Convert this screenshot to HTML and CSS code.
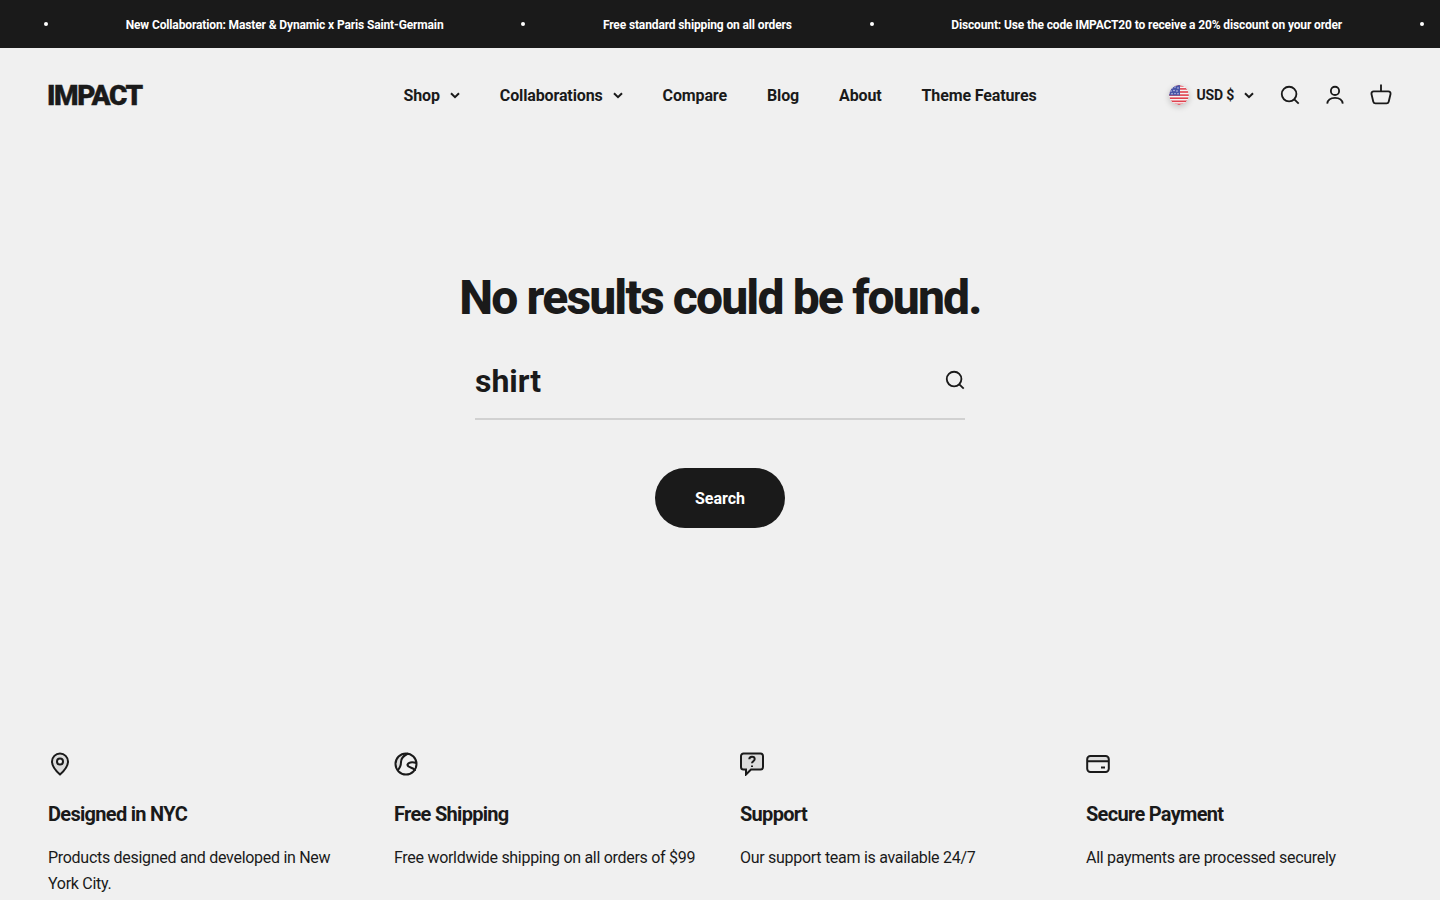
FILE: index.html
```html
<!DOCTYPE html>
<html lang="en">
<head>
    <meta charset="utf-8">
    <title>Search - Impact</title>
    <link rel="stylesheet" href="styles.css">
</head>
<body>
    <div class="announcement">
        <span class="dot"></span>
        <span class="announcement-text">New Collaboration: Master &amp; Dynamic x Paris Saint-Germain</span>
        <span class="dot"></span>
        <span class="announcement-text">Free standard shipping on all orders</span>
        <span class="dot"></span>
        <span class="announcement-text">Discount: Use the code IMPACT20 to receive a 20% discount on your order</span>
        <span class="dot"></span>
    </div>

    <header class="header">
        <a class="logo" href="#">IMPACT</a>
        <nav class="nav">
            <a href="#">Shop <svg class="chevron" viewBox="0 0 10 7"><path d="M1 1.2l4 4 4-4" /></svg></a>
            <a href="#">Collaborations <svg class="chevron" viewBox="0 0 10 7"><path d="M1 1.2l4 4 4-4" /></svg></a>
            <a href="#">Compare</a>
            <a href="#">Blog</a>
            <a href="#">About</a>
            <a href="#">Theme Features</a>
        </nav>
        <div class="tools">
            <div class="currency">
                <svg class="flag" viewBox="0 0 20 20">
                    <defs><clipPath id="flagClip"><circle cx="10" cy="10" r="10" /></clipPath></defs>
                    <g clip-path="url(#flagClip)">
                        <rect width="20" height="20" fill="#f4f4f4" />
                        <rect y="0" width="20" height="1.6" fill="#e0424f" />
                        <rect y="3.1" width="20" height="1.6" fill="#e0424f" />
                        <rect y="6.2" width="20" height="1.6" fill="#e0424f" />
                        <rect y="9.3" width="20" height="1.6" fill="#e0424f" />
                        <rect y="12.4" width="20" height="1.6" fill="#e0424f" />
                        <rect y="15.5" width="20" height="1.6" fill="#e0424f" />
                        <rect y="18.6" width="20" height="1.4" fill="#e0424f" />
                        <rect width="11" height="10.5" fill="#4a55a8" />
                        <g fill="#dfe3f5">
                            <circle cx="3" cy="3" r=".7" /><circle cx="6" cy="2" r=".7" /><circle cx="9" cy="3" r=".7" />
                            <circle cx="2" cy="6" r=".7" /><circle cx="5" cy="5.5" r=".7" /><circle cx="8" cy="6" r=".7" />
                            <circle cx="3" cy="8.8" r=".7" /><circle cx="6" cy="8.6" r=".7" /><circle cx="9" cy="8.8" r=".7" />
                        </g>
                    </g>
                </svg>
                <span>USD $</span>
                <svg class="chevron" viewBox="0 0 10 7"><path d="M1 1.2l4 4 4-4" /></svg>
            </div>
            <svg class="tool-icon tool-search" viewBox="0 0 24 24"><circle cx="11" cy="11" r="8" /><path d="M16.700 16.700L21.500 21.500" /></svg>
            <svg class="tool-icon" viewBox="0 0 24 24"><circle cx="12" cy="7.500" r="4.500" /><path d="M3.500 21.500c.6-4.200 4-6.300 8.500-6.300s7.900 2.100 8.500 6.300" /></svg>
            <svg class="tool-icon" viewBox="0 0 24 24"><path d="M4 8h16a2.500 2.500 0 0 1 2.400 3l-2 8.300a2.500 2.500 0 0 1-2.400 1.900H6a2.500 2.500 0 0 1-2.400-1.900l-2-8.300A2.500 2.500 0 0 1 4 8z" /><path d="M12 8V.5" /></svg>
        </div>
    </header>

    <main class="search-section">
        <h1>No results could be found.</h1>
        <form class="search-form">
            <div class="search-field">
                <span class="search-value">shirt</span>
                <svg class="search-icon" viewBox="0 0 24 24"><circle cx="11" cy="11" r="8" /><path d="M16.700 16.700L21.500 21.500" /></svg>
            </div>
            <button type="button" class="search-button">Search</button>
        </form>
    </main>

    <section class="features">
        <div class="feature">
            <svg class="feature-icon" viewBox="0 0 24 24">
                <path class="fill" d="M12 22.500s-8-7-8-13a8 8 0 0 1 16 0c0 6-8 13-8 13z" />
                <path d="M12 22.500s-8-7-8-13a8 8 0 0 1 16 0c0 6-8 13-8 13z" />
                <circle class="ring" cx="12" cy="9.500" r="3" />
            </svg>
            <h3>Designed in NYC</h3>
            <p>Products designed and developed in New York City.</p>
        </div>
        <div class="feature">
            <svg class="feature-icon" viewBox="0 0 24 24">
                <path class="fill" d="M14 1.500C10 3.500 7 6 7 10c0 3 0 5-3.500 8.500A10.500 10.500 0 0 1 14 1.500z" />
                <circle cx="12" cy="12" r="10.500" />
                <path d="M14 1.500C10 3.500 7 6 7 10c0 3 0 5-3.500 8.500" />
                <path d="M22.500 11c-3.500-1-7.500-1-9 1.500-.5 2.500 3.500 3 5.500 4 1 .5 2 1.500 2 2.500" />
            </svg>
            <h3>Free Shipping</h3>
            <p>Free worldwide shipping on all orders of $99</p>
        </div>
        <div class="feature">
            <svg class="feature-icon" viewBox="0 0 24 24">
                <path class="fill" d="M3.500 1.500h17a2.500 2.500 0 0 1 2.500 2.500v11a2.500 2.500 0 0 1-2.500 2.500H11l-5 5v-5H3.500A2.500 2.500 0 0 1 1 15V4a2.500 2.500 0 0 1 2.500-2.500z" />
                <path d="M3.500 1.500h17a2.500 2.500 0 0 1 2.500 2.500v11a2.500 2.500 0 0 1-2.500 2.500H11l-5 5v-5H3.500A2.500 2.500 0 0 1 1 15V4a2.500 2.500 0 0 1 2.500-2.500z" />
                <path d="M9.300 7.300c0-1.600 1.200-2.600 2.700-2.600s2.700 1 2.700 2.400c0 2.200-2.700 2.200-2.700 4.200" />
                <path d="M12 13.500v1.500" />
            </svg>
            <h3>Support</h3>
            <p>Our support team is available 24/7</p>
        </div>
        <div class="feature">
            <svg class="feature-icon" viewBox="0 0 24 24">
                <path class="fill" d="M1.500 9V7a3 3 0 0 1 3-3h15a3 3 0 0 1 3 3v2z" />
                <rect x="1.200" y="4" width="21.600" height="16" rx="3.200" />
                <path d="M1.200 9.200h21.600M15 15.500h4" />
            </svg>
            <h3>Secure Payment</h3>
            <p>All payments are processed securely</p>
        </div>
    </section>
</body>
</html>
```

FILE: styles.css
```css
* {
    box-sizing: border-box;
}

body {
    margin: 0;
    font-family: Roboto, "Liberation Sans", sans-serif;
    background-color: #f0f0f0;
    color: #1a1a1a;
}

a {
    color: inherit;
    text-decoration: none;
}

.announcement {
    display: flex;
    align-items: center;
    gap: 77.7px;
    height: 48px;
    padding-left: 44px;
    overflow: hidden;
    background-color: #1a1a1a;
    color: #fff;
    font-size: 12px;
    font-weight: 700;
    letter-spacing: -0.13px;
    white-space: nowrap;
}

.dot {
    flex: none;
    width: 4px;
    height: 4px;
    border-radius: 50%;
    background-color: #fff;
}

.announcement-text {
    flex: none;
    padding-top: 2px;
}

.header {
    display: grid;
    grid-template-columns: 1fr auto 1fr;
    align-items: center;
    height: 94px;
    padding: 0 48px;
}

.logo {
    margin-left: -1px;
    padding-top: 2px;
    font-size: 28px;
    font-weight: 900;
    letter-spacing: -1.4px;
    line-height: 1;
    -webkit-text-stroke: 0.4px #1a1a1a;
}

.nav {
    display: flex;
    align-items: center;
    gap: 40px;
    font-size: 16px;
    font-weight: 700;
    letter-spacing: -0.13px;
}

.nav a {
    display: flex;
    align-items: center;
    gap: 10px;
}

.chevron {
    width: 10px;
    height: 7px;
    fill: none;
    stroke: #1a1a1a;
    stroke-width: 2;
}

.tools {
    display: flex;
    align-items: center;
    justify-content: flex-end;
    gap: 24px;
}

.currency {
    display: flex;
    align-items: center;
    gap: 8px;
    font-size: 14px;
    font-weight: 700;
    letter-spacing: -0.2px;
}

.currency .chevron {
    margin-left: 2px;
}

.flag {
    width: 20px;
    height: 20px;
    border-radius: 50%;
    box-shadow: 0 2px 6px rgba(0, 0, 0, 0.2);
}

.tool-icon {
    width: 22px;
    height: 22px;
    fill: none;
    stroke: #1a1a1a;
    stroke-width: 2;
}

.tool-search {
    margin: 0 -1px 0 1px;
}

.search-section {
    display: flex;
    flex-direction: column;
    align-items: center;
    padding-top: 125px;
}

h1 {
    margin: 0;
    font-size: 48px;
    font-weight: 800;
    line-height: 62px;
    letter-spacing: -1.85px;
}

.search-form {
    display: flex;
    flex-direction: column;
    align-items: center;
    width: 490px;
}

.search-field {
    display: flex;
    justify-content: space-between;
    align-items: flex-start;
    width: 100%;
    height: 74px;
    padding-top: 15px;
    margin-top: 17px;
    border-bottom: 2px solid #d1d1d1;
}

.search-value {
    font-size: 32px;
    font-weight: 700;
    line-height: 40px;
}

.search-icon {
    width: 22px;
    height: 22px;
    margin: 8px -1px 0 0;
    fill: none;
    stroke: #1a1a1a;
    stroke-width: 2;
}

.search-button {
    width: 130px;
    height: 60px;
    margin-top: 48px;
    border: none;
    border-radius: 30px;
    background-color: #1a1a1a;
    color: #fff;
    font-family: inherit;
    font-size: 16px;
    font-weight: 700;
}

.features {
    display: grid;
    grid-template-columns: repeat(4, 1fr);
    gap: 40px;
    margin-top: 224px;
    padding: 0 48px;
}

.feature h3 {
    margin: 24px 0 0;
    font-size: 20px;
    font-weight: 700;
    line-height: 28px;
    letter-spacing: -0.7px;
}

.feature p {
    margin: 17px 0 0;
    font-size: 16px;
    line-height: 26px;
    letter-spacing: -0.29px;
}

.feature-icon {
    display: block;
    width: 24px;
    height: 24px;
    fill: none;
    stroke: #1a1a1a;
    stroke-width: 2;
}

.feature-icon .fill {
    fill: #dcdcdc;
    stroke: none;
}

.feature-icon .ring {
    fill: #f0f0f0;
}
```
